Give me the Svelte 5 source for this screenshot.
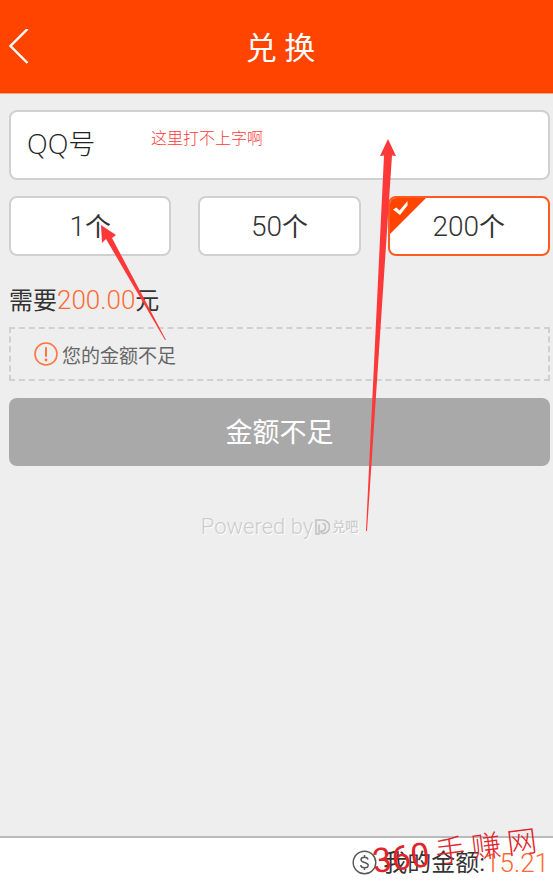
<script lang="ts">
	const options = [1, 50, 200];

	let account = $state('');
	let selected = $state(200);
	let price = $derived(selected.toFixed(2));
</script>

<div class="page">
	<header>
		<button type="button" class="back" aria-label="返回">
			<svg width="20" height="36" viewBox="0 0 20 36" fill="none" stroke="#fff" stroke-width="2.4">
				<path d="M18.500 0 1.500 17l17 17" />
			</svg>
		</button>
		<h1>兑 换</h1>
	</header>

	<main>
		<div class="field">
			<input type="text" placeholder="QQ号" aria-label="QQ号" bind:value={account} />
			<span class="remark">这里打不上字啊</span>
		</div>

		<div class="options">
			{#each options as count}
				<button
					type="button"
					class="option"
					class:selected={selected === count}
					aria-pressed={selected === count}
					onclick={() => (selected = count)}
				>
					{#if selected === count}
						<svg class="corner" width="36" height="36" viewBox="0 0 36 36">
							<path d="M0 0h36L0 36z" fill="#ff4400" />
							<path d="M3 11.500 6.500 9.500l3 3L17.500 3v4.500L10 17z" fill="#fff" />
						</svg>
					{/if}
					<span class="num">{count}</span><span>个</span>
				</button>
			{/each}
		</div>

		<p class="price">需要<span class="num amount">{price}</span>元</p>

		<p class="notice">
			<svg width="24" height="24" viewBox="0 0 24 24" fill="none" stroke="#ff7440">
				<circle cx="12" cy="12" r="11" stroke-width="1.600" />
				<path d="M12 6v8" stroke-width="2" stroke-linecap="round" />
				<circle cx="12" cy="18" r="1.400" fill="#ff7440" stroke="none" />
			</svg>
			<span>您的金额不足</span>
		</p>

		<button type="button" class="submit" disabled>金额不足</button>

		<p class="powered">
			<span>Powered by</span>
			<svg width="15" height="16" viewBox="0 0 15 16" fill="none" stroke="#c2c2c2" stroke-width="1.600">
				<path d="M5 1H1v14h3V5.500" />
				<path d="M4 1h3.500a6.300 6.300 0 0 1 .500 13.500c-1.500 0-2.500-1-2-2.500 3 .500 4.500-1.500 4.500-4S9 4.500 7.500 4.500" />
			</svg>
			<span class="brand">兑吧</span>
		</p>
	</main>

	<footer>
		<svg width="25" height="25" viewBox="0 0 25 25" fill="none" stroke="#555" stroke-width="1.400">
			<circle cx="12.500" cy="12.500" r="11.300" />
			<path d="M16 9.500c-.3-1.500-1.600-2.200-3.500-2.200S9 8.100 9 9.700c0 3.700 7.200 2 7.200 5.600 0 1.600-1.500 2.500-3.700 2.500s-3.600-.9-3.800-2.700M12.500 5v2.300M12.500 17.800V20" />
		</svg>
		<span>我的金额:</span><span class="num amount">15.21</span>
		<span class="watermark"><b>360</b><i>手</i><i>赚</i><i>网</i></span>
	</footer>

	<svg class="arrows" width="553" height="540" viewBox="0 0 553 540" fill="#fd3838" aria-hidden="true">
		<path d="M388 139 396 156 392 155.500 367 531H366L384 155.500 380 156z" />
		<path d="M101 225 116 235 112 238 166 340 165 340 106 239 102 243z" />
	</svg>
</div>

<style>
	:global(body) {
		margin: 0;
		background: #eee;
	}

	.page {
		position: relative;
		display: flex;
		flex-direction: column;
		min-height: 100vh;
		overflow: hidden;
		background: #eee;
		color: #333;
		font-family: Roboto, 'Noto Sans CJK SC', sans-serif;
		font-size: 26px;
	}

	button,
	input {
		box-sizing: border-box;
		font: inherit;
		color: inherit;
	}

	p,
	h1 {
		margin: 0;
	}

	header {
		display: grid;
		grid-template-columns: 60px 1fr 60px;
		align-items: center;
		height: 93px;
		background: #ff4400;
		border-bottom: 1px solid #f5a587;
		color: #fff;
	}

	.back {
		display: flex;
		padding: 0 0 0 9px;
		border: none;
		background: none;
		cursor: pointer;
	}

	h1 {
		padding-top: 4px;
		padding-left: 8px;
		text-align: center;
		font-size: 31px;
		line-height: 44px;
		font-weight: 400;
	}

	main {
		flex: 1;
		padding: 16px 3px 16px 9px;
	}

	.field {
		position: relative;
	}

	input {
		display: block;
		width: 100%;
		height: 70px;
		padding: 0 16px 4px;
		border: 2px solid #d0d0d0;
		border-radius: 8px;
		background: #fff;
		font-family: 'Open Sans', 'Noto Sans CJK SC', sans-serif;
		font-size: 27px;
		font-weight: 300;
	}

	input::placeholder {
		color: #222;
		opacity: 1;
	}

	.remark {
		position: absolute;
		top: 17px;
		left: 142px;
		color: #fd3838;
		font-size: 16px;
		line-height: 24px;
		font-weight: 300;
		pointer-events: none;
	}

	.options {
		display: grid;
		grid-template-columns: repeat(3, 1fr);
		gap: 27px;
		margin-top: 16px;
	}

	.option {
		position: relative;
		height: 60px;
		padding: 0 0 3px;
		border: 2px solid #d0d0d0;
		border-radius: 8px;
		background: #fff;
		overflow: hidden;
		cursor: pointer;
	}

	.option.selected {
		border-color: #ff5a1f;
	}

	.corner {
		position: absolute;
		top: 0;
		left: 0;
	}

	.num {
		font-size: 28px;
		font-weight: 300;
	}

	.amount {
		color: #ff6a33;
		font-size: 26px;
	}

	.price {
		margin-top: 26px;
		font-size: 24px;
		line-height: 36px;
	}

	.notice {
		display: flex;
		align-items: center;
		gap: 4px;
		height: 50px;
		margin-top: 8px;
		padding-left: 23px;
		border: 2px dashed #d0d0d0;
		color: #666;
		font-size: 19px;
	}

	.submit {
		display: block;
		width: 100%;
		height: 68px;
		margin-top: 17px;
		padding: 0 0 4px;
		border: none;
		border-radius: 8px;
		background: #a9a9a9;
		color: #fff;
		font-size: 27px;
	}

	.powered {
		display: flex;
		align-items: center;
		justify-content: center;
		gap: 2px;
		margin-top: 46px;
		color: #ccc;
		font-size: 22px;
		line-height: 30px;
		font-weight: 300;
		text-shadow: 1px 1px 0 #fff;
	}

	.brand {
		font-size: 13px;
		font-weight: 500;
	}

	footer {
		position: relative;
		display: flex;
		align-items: center;
		justify-content: flex-end;
		height: 49px;
		padding-right: 4px;
		border-top: 2px solid #bbb;
		background: #fff;
		font-size: 24px;
		line-height: 36px;
	}

	footer svg {
		margin-right: 6px;
	}

	.watermark {
		position: absolute;
		right: 16px;
		bottom: 18px;
		display: flex;
		align-items: center;
		gap: 6px;
		color: #e0242b;
		font-size: 30px;
		line-height: 36px;
		transform: rotate(-7deg);
		pointer-events: none;
	}

	.watermark b {
		font-size: 34px;
		font-weight: 400;
	}

	.watermark i {
		font-style: normal;
		font-weight: 300;
	}

	.arrows {
		position: absolute;
		top: 0;
		left: 0;
		pointer-events: none;
	}
</style>
